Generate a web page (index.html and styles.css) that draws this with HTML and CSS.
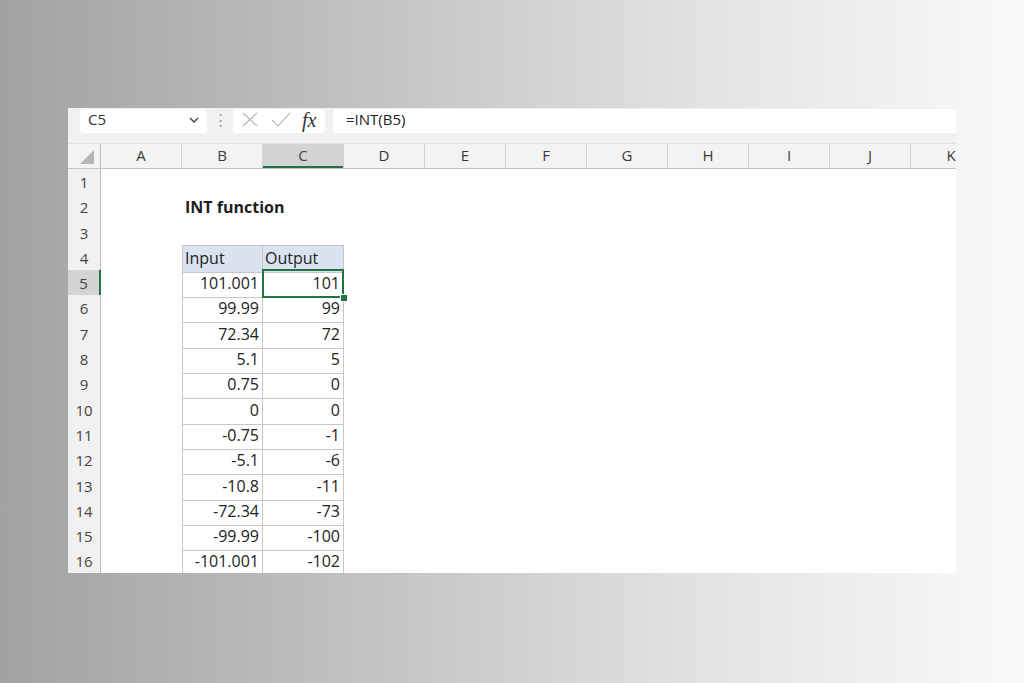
FILE: index.html
```html
<!DOCTYPE html>
<html lang="en">
<head>
<meta charset="utf-8">
<title>INT function</title>
<link rel="stylesheet" href="styles.css">
</head>
<body>
<div class="sheet">
  <div class="fbar">
    <div class="namebox">
      <span class="ref">C5</span>
      <svg class="chev" width="10" height="6" viewBox="0 0 10 6"><path d="M1 1 L5 5 L9 1" fill="none" stroke="#444" stroke-width="1.4"/></svg>
    </div>
    <div class="grip">&#8942;</div>
    <div class="btns">
      <svg class="ico" width="16" height="15" viewBox="0 0 16 15"><path d="M1 1 L15 14 M15 1 L1 14" stroke="#b9b9b9" stroke-width="1.2" fill="none"/></svg>
      <svg class="ico" width="20" height="15" viewBox="0 0 20 15"><path d="M1 8 L7 14 L19 1" stroke="#b9b9b9" stroke-width="1.2" fill="none"/></svg>
      <span class="fx">fx</span>
    </div>
    <div class="formula">=INT(B5)</div>
  </div>

  <div class="colhdr">
    <div class="corner"><span class="tri"></span></div>
    <div class="ch">A</div><div class="ch">B</div><div class="ch on">C</div><div class="ch">D</div>
    <div class="ch">E</div><div class="ch">F</div><div class="ch">G</div><div class="ch">H</div>
    <div class="ch">I</div><div class="ch">J</div><div class="ch">K</div>
  </div>

  <div class="row"><div class="rh">1</div></div>
  <div class="row"><div class="rh">2</div><div class="title">INT function</div></div>
  <div class="row"><div class="rh">3</div></div>
  <div class="row"><div class="rh">4</div><div class="t b top hd">Input</div><div class="t c top hd">Output</div></div>
  <div class="row"><div class="rh cur">5</div><div class="t b">101.001</div><div class="t c sel">101</div></div>
  <div class="row"><div class="rh">6</div><div class="t b">99.99</div><div class="t c">99</div></div>
  <div class="row"><div class="rh">7</div><div class="t b">72.34</div><div class="t c">72</div></div>
  <div class="row"><div class="rh">8</div><div class="t b">5.1</div><div class="t c">5</div></div>
  <div class="row"><div class="rh">9</div><div class="t b">0.75</div><div class="t c">0</div></div>
  <div class="row"><div class="rh">10</div><div class="t b">0</div><div class="t c">0</div></div>
  <div class="row"><div class="rh">11</div><div class="t b">-0.75</div><div class="t c">-1</div></div>
  <div class="row"><div class="rh">12</div><div class="t b">-5.1</div><div class="t c">-6</div></div>
  <div class="row"><div class="rh">13</div><div class="t b">-10.8</div><div class="t c">-11</div></div>
  <div class="row"><div class="rh">14</div><div class="t b">-72.34</div><div class="t c">-73</div></div>
  <div class="row"><div class="rh">15</div><div class="t b">-99.99</div><div class="t c">-100</div></div>
  <div class="row"><div class="rh">16</div><div class="t b">-101.001</div><div class="t c">-102</div></div>
</div>
</body>
</html>
```

FILE: styles.css
```css
html, body {
  margin: 0;
  height: 100%;
}

body {
  box-sizing: border-box;
  padding: 108px 0 0 68px;
  background: linear-gradient(90deg, #a2a2a2 0%, #c6c6c6 40%, #e4e4e4 70%, #fafafa 100%);
  font-family: "Open Sans", "Liberation Sans", sans-serif;
  color: #222;
  overflow: hidden;
}

.sheet {
  width: 888px;
  height: 465px;
  background: #fff;
  overflow: hidden;
}

/* formula bar */
.fbar {
  height: 35px;
  box-sizing: border-box;
  padding: 1px 0 10px 12px;
  background: #f1f1f1;
  display: flex;
  align-items: stretch;
}

.namebox {
  width: 127px;
  background: #fff;
  border-radius: 4px;
  display: flex;
  align-items: center;
  justify-content: space-between;
  padding: 0 8px 4px 8px;
  box-sizing: border-box;
  font-size: 15px;
  color: #333;
}

.chev {
  margin-top: 2px;
}

.grip {
  width: 26px;
  text-align: center;
  font-size: 15px;
  line-height: 21px;
  color: #9a9a9a;
}

.btns {
  width: 92px;
  background: #fff;
  border-radius: 4px;
  display: flex;
  align-items: center;
  padding: 0 0 3px 9px;
  gap: 13px;
  box-sizing: border-box;
}

.fx {
  font-family: "Liberation Serif", "DejaVu Serif", serif;
  font-style: italic;
  font-size: 20px;
  color: #333;
  margin-left: -2px;
  line-height: 1;
}

.formula {
  flex: 1;
  margin-left: 8px;
  background: #fff;
  border-radius: 4px 0 0 4px;
  padding-left: 13px;
  font-size: 15px;
  line-height: 20px;
  color: #222;
}

/* column headers */
.colhdr {
  display: grid;
  grid-template-columns: 33px repeat(11, 81px);
  height: 26px;
  box-sizing: border-box;
  background: #f3f3f3;
  border-bottom: 1px solid #c4c4c4;
  border-top: 1px solid #e2e2e2;
}

.corner {
  position: relative;
  border-right: 1px solid #bcbcbc;
}

.tri {
  position: absolute;
  right: 6px;
  bottom: 4px;
  width: 0;
  height: 0;
  border-left: 14px solid transparent;
  border-bottom: 14px solid #b5b5b5;
}

.ch {
  border-right: 1px solid #d2d2d2;
  text-align: center;
  font-size: 15px;
  line-height: 22px;
  color: #3a3a3a;
}

.ch.on {
  background: #d3d3d3;
  box-shadow: inset 0 -2px 0 #217346;
  color: #444;
}

/* rows */
.row {
  display: grid;
  grid-template-columns: 33px repeat(11, 81px);
  height: 25.3px;
  font-size: 16px;
}

.rh {
  grid-column: 1;
  background: #f1f1f1;
  border-right: 1px solid #bcbcbc;
  border-bottom: 1px solid #d6d6d6;
  box-sizing: border-box;
  text-align: center;
  font-size: 15px;
  line-height: 27px;
  color: #444;
}

.rh.cur {
  background: #d3d3d3;
  border-right: 2px solid #217346;
}

.title {
  grid-column: 3;
  white-space: nowrap;
  font-weight: 700;
  font-size: 16px;
  line-height: 27px;
  padding-left: 3px;
  color: #1e1e1e;
}

.t {
  box-sizing: border-box;
  border-right: 1px solid #c8c8c8;
  border-bottom: 1px solid #c8c8c8;
  text-align: right;
  padding-right: 3px;
  line-height: 27px;
  white-space: nowrap;
}

.t.b {
  grid-column: 3;
  border-left: 1px solid #c8c8c8;
}

.t.c {
  grid-column: 4;
}

.t.top {
  border-top: 1px solid #c8c8c8;
  line-height: 25px;
}

.t.hd {
  background: #dbe3f1;
  text-align: left;
  padding-left: 2px;
}

/* active cell frame and fill handle */
.sel {
  position: relative;
}

.sel::after {
  content: "";
  position: absolute;
  left: -1px;
  top: -1px;
  right: -1px;
  bottom: -1px;
  border: 2px solid #217346;
}

.sel::before {
  content: "";
  position: absolute;
  right: -4px;
  bottom: -4px;
  width: 6px;
  height: 6px;
  background: #217346;
  outline: 1px solid #fff;
  z-index: 1;
}
```
